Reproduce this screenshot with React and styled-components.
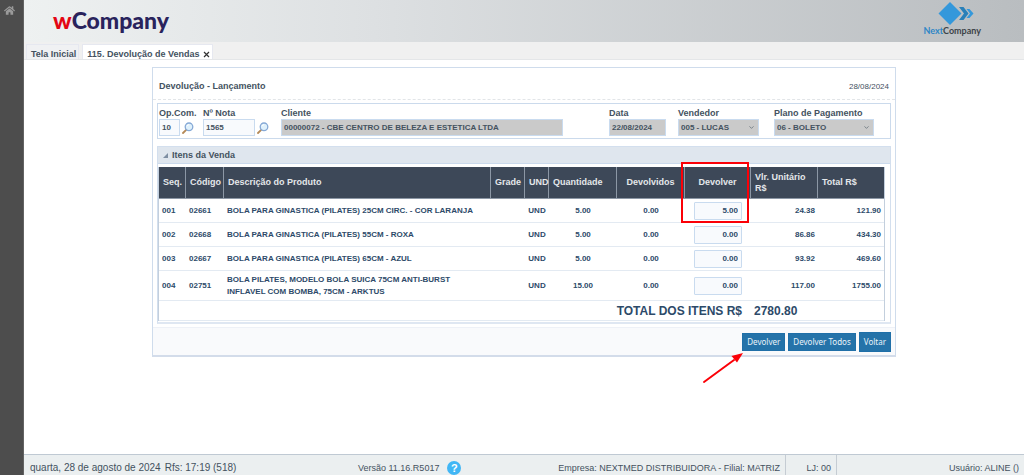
import { useState } from "react"
import styled, { createGlobalStyle } from "styled-components"
import { FaHome } from "react-icons/fa"
import { ChevronDown } from "lucide-react"

const GlobalStyle = createGlobalStyle`
    * {
        box-sizing: border-box;
    }

    body {
        margin: 0;
        background: #fff;
        color: #44525f;
        font: 9px/11px "Liberation Sans", Arial, sans-serif;
    }

    button, input, select {
        font: inherit;
        color: inherit;
    }
`

const Page = styled.div`
    display: flex;
    min-height: 100vh;
`

const Sidebar = styled.nav`
    width: 24px;
    flex: none;
    padding: 5px 0 0 4px;
    background: #4d4d4d;
    border-right: 1px solid #636363;

    a {
        display: flex;
        color: #9a9a9a;
        font-size: 11px;
    }
`

const Main = styled.div`
    flex: 1;
    min-width: 0;
    display: flex;
    flex-direction: column;
`

const Header = styled.header`
    height: 42px;
    display: flex;
    justify-content: space-between;
    align-items: center;
    padding: 0 43px 0 29px;
    background: linear-gradient(to right, #eef1f1, #dde0e2 35%, #b9bdc0);
`

const Brand = styled.div`
    padding-bottom: 2px;
    font: 900 23px/36px Lato, "Open Sans", sans-serif;
    color: #29235c;

    span {
        color: #e30613;
    }
`

const Partner = styled.div`
    display: flex;
    flex-direction: column;
    align-items: center;
    padding-bottom: 4px;
    font: 700 9px/12px Lato, "Open Sans", sans-serif;
    color: #3c4348;

    svg {
        display: block;
        margin-left: 8px;
    }

    span {
        color: #2f86c6;
    }
`

const Tabs = styled.div`
    height: 18px;
    display: flex;
    align-items: flex-end;
    gap: 3px;
    padding-left: 2px;
    background: #f0f0f0;
    border-bottom: 1px solid #e4e6e8;
`

const Tab = styled.button`
    height: 15px;
    display: flex;
    align-items: center;
    gap: 4px;
    padding: 4px 2px 0 4px;
    border: 1px solid #e6e8f0;
    border-bottom: 0;
    background: ${props => props.$active ? '#fff' : '#f0f1f3'};
    font-weight: bold;
    white-space: nowrap;
`

const Content = styled.main`
    flex: 1;
    padding: 7px 128px;
`

const Window = styled.section`
    border: 1px solid #cfdcec;
    border-bottom: 2px solid #d3dcea;
`

const WindowTitle = styled.div`
    height: 32px;
    display: flex;
    justify-content: space-between;
    align-items: center;
    padding: 5px 6px 0;
    border-bottom: 1px dashed #e2e5e8;

    h1 {
        margin: 0;
        font-size: 9px;
    }

    span {
        font-size: 8px;
    }
`

const Form = styled.form`
    display: grid;
    grid-template-columns: 44px 78px minmax(0, 1fr) 69px 96px 116px;
    margin: 3px 4px 0;
    padding: 4px 0 2px 1px;
    border: 1px solid #cbdaec;
    font-weight: bold;
`

const Field = styled.div`
    padding-right: ${props => props.$space || 0}px;

    label {
        display: block;
        height: 11px;
        white-space: nowrap;
    }
`

const Control = styled.div`
    display: flex;
    align-items: center;
    gap: 2px;
    position: relative;
`

const TextInput = styled.input`
    flex: 1;
    min-width: 0;
    width: 100%;
    height: 17px;
    padding: 0 2px;
    border: 1px solid #c9dbef;
    background: ${props => props.readOnly ? '#cacaca' : '#f8fafd'};
    font-size: 8px;
`

const Dropdown = styled.select`
    appearance: none;
    width: 100%;
    height: 17px;
    padding: 0 2px;
    border: 1px solid #c9dbef;
    border-radius: 0;
    background: #cacaca;
    font-size: 8px;

    & + svg {
        position: absolute;
        right: 4px;
        pointer-events: none;
    }
`

const SearchButton = styled.button`
    display: flex;
    padding: 0;
    border: 0;
    background: none;
`

const Items = styled.div`
    margin: 7px 4px 3px;
    padding-bottom: 1px;
    border: 1px solid #d3dfee;
    border-bottom: 2px solid #dfe7f2;
`

const ItemsTitle = styled.h2`
    height: 17px;
    display: flex;
    align-items: center;
    gap: 4px;
    margin: 0 0 3px;
    padding-left: 5px;
    background: #dfe6ee;
    border-bottom: 1px solid #cbdaec;
    font-size: 9px;
`

const Table = styled.table`
    width: calc(100% - 5px);
    table-layout: fixed;
    border-collapse: separate;
    border-spacing: 0;
    border: 1px solid #c3cfdd;
    border-top: 0;
    border-bottom: 0;
    color: #2d4a69;
    font-weight: bold;

    th {
        height: 32px;
        position: relative;
        padding: 0 4px;
        background: #3d4858;
        border-right: 1px solid #8c97a5;
        border-bottom: 1px solid #8c97a5;
        color: #e4e7ea;
        text-align: left;
    }

    th:last-child {
        border-right: 0;
    }

    td {
        height: 24px;
        padding: 0 3px;
        border-bottom: 1px solid #e3eaf2;
        font-size: 8px;
        line-height: 12px;
    }

    .center {
        text-align: center;
    }

    td.right {
        text-align: right;
    }
`

const Quantity = styled.input`
    display: block;
    width: 48px;
    height: 18px;
    margin: 0 auto;
    padding: 0 3px;
    border: 1px solid #c9dbef;
    border-radius: 1px;
    background: #f8fafd;
    text-align: right;
`

const TotalRow = styled.tr`
    && td {
        height: 20px;
        padding-right: 9px;
        font-size: 12px;
        font-weight: 900;
    }

    && td + td {
        padding: 0 0 0 3px;
    }
`

const Highlight = styled.span`
    position: absolute;
    top: -5px;
    left: -4px;
    width: 68px;
    height: 61px;
    border: 2px solid #fb0007;
    z-index: 1;
    pointer-events: none;
`

const Actions = styled.div`
    display: flex;
    justify-content: flex-end;
    align-items: center;
    gap: 3px;
    padding: 4px 4px 3px;
    border-top: 1px solid #eef1f7;
    background: #f9fafc;
`

const ActionItem = styled.div`
    position: relative;

    svg {
        position: absolute;
        top: 19px;
        left: -40px;
        pointer-events: none;
    }
`

const ActionButton = styled.button`
    display: block;
    height: ${props => props.$large ? '20px' : '18px'};
    padding: 0 4px;
    border: 1px solid #1f6fa8;
    background: #2573a9;
    color: #eaf3fa;
    font: 8px/12px "Noto Sans", "Open Sans", sans-serif;
    white-space: nowrap;
`

const StatusBar = styled.footer`
    height: 21px;
    display: flex;
    background: #ebeff0;
    border-top: 1px solid #bfc9d3;
    line-height: 12px;
    white-space: nowrap;

    > div {
        display: flex;
        align-items: center;
        padding-top: 5px;
    }
`

const DateInfo = styled.div`
    width: 328px;
    padding-left: 6px;
    gap: 4px;
    font-size: 10px;
`

const Version = styled.div`
    flex: 1;
    gap: 8px;
    padding-left: 6px;
`

const StatusCell = styled.div`
    width: ${props => props.$width || 'auto'};
    justify-content: flex-end;
    padding: 0 5px;
    border-right: ${props => props.$last ? '0' : '1px solid #c5ccd3'};
`

const HelpButton = styled.button`
    width: 14px;
    height: 14px;
    padding: 0;
    border: 0;
    border-radius: 50%;
    background: #41b6f5;
    color: #fff;
    font-size: 11px;
    font-weight: bold;
    line-height: 14px;
`

const ITEMS = [
    { seq: '001', code: '02661', name: 'BOLA PARA GINASTICA (PILATES) 25CM CIRC. - COR LARANJA', amount: '5.00', give: '5.00', price: '24.38', total: '121.90' },
    { seq: '002', code: '02668', name: 'BOLA PARA GINASTICA (PILATES) 55CM - ROXA', amount: '5.00', give: '0.00', price: '86.86', total: '434.30' },
    { seq: '003', code: '02667', name: 'BOLA PARA GINASTICA (PILATES) 65CM - AZUL', amount: '5.00', give: '0.00', price: '93.92', total: '469.60' },
    { seq: '004', code: '02751', name: 'BOLA PILATES, MODELO BOLA SUICA 75CM ANTI-BURST INFLAVEL COM BOMBA, 75CM - ARKTUS', amount: '15.00', give: '0.00', price: '117.00', total: '1755.00' },
]

const ProductCell = styled.td`
    && {
        padding-right: 10px;
        height: ${props => props.$tall ? '30px' : '24px'};
    }
`

function Search({ label }) {
    return (
        <SearchButton type="button" aria-label={label}>
            <svg width="12" height="12" viewBox="0 0 12 12">
                <path d="M1 11 L4.2 7.8" stroke="#b58a58" strokeWidth="1.8" strokeLinecap="round" />
                <circle cx="7" cy="4.8" r="3.8" fill="#dff1fc" stroke="#86a9d6" strokeWidth="1.3" />
                <path d="M5 4.2 A2.2 2.2 0 0 1 7 2.7" fill="none" stroke="#fff" />
            </svg>
        </SearchButton>
    )
}

export default function App() {
    const [give, setGive] = useState(ITEMS.map(item => item.give))

    const updateGive = (index, value) => {
        setGive(prev => prev.map((old, i) => i === index ? value : old))
    }

    return (
        <Page>
            <GlobalStyle />
            <Sidebar>
                <a href="#inicio" aria-label="Início"><FaHome /></a>
            </Sidebar>
            <Main>
                <Header>
                    <Brand><span>w</span>Company</Brand>
                    <Partner>
                        <svg width="36" height="23" viewBox="0 0 36 23">
                            <path d="M12 0 L23.5 11.5 L12 23 L0.5 11.5 Z" fill="#3498db" />
                            <path d="M21 5 h4.5 l5 6.5 l-5 6.5 h-4.5 l5 -6.5 Z" fill="#2980b9" />
                            <path d="M28.5 7 h3 l4 4.5 l-4 4.5 h-3 l3.5 -4.5 Z" fill="#3498db" />
                        </svg>
                        <div><span>Next</span>Company</div>
                    </Partner>
                </Header>
                <Tabs>
                    <Tab>Tela Inicial</Tab>
                    <Tab $active>
                        115. Devolução de Vendas
                        <svg width="7" height="7" viewBox="0 0 7 7" stroke="#333" strokeWidth="1.2">
                            <path d="M1 1 L6 6 M6 1 L1 6" />
                        </svg>
                    </Tab>
                </Tabs>
                <Content>
                    <Window>
                        <WindowTitle>
                            <h1>Devolução - Lançamento</h1>
                            <span>28/08/2024</span>
                        </WindowTitle>
                        <Form>
                            <Field $space={9}>
                                <label htmlFor="op">Op.Com.</label>
                                <Control>
                                    <TextInput id="op" defaultValue="10" />
                                    <Search label="Buscar operação" />
                                </Control>
                            </Field>
                            <Field $space={12}>
                                <label htmlFor="nota">Nº Nota</label>
                                <Control>
                                    <TextInput id="nota" defaultValue="1565" />
                                    <Search label="Buscar nota" />
                                </Control>
                            </Field>
                            <Field $space={46}>
                                <label htmlFor="cliente">Cliente</label>
                                <TextInput id="cliente" readOnly value="00000072 - CBE CENTRO DE BELEZA E ESTETICA LTDA" />
                            </Field>
                            <Field $space={12}>
                                <label htmlFor="data">Data</label>
                                <TextInput id="data" readOnly value="22/08/2024" />
                            </Field>
                            <Field $space={15}>
                                <label htmlFor="vendedor">Vendedor</label>
                                <Control>
                                    <Dropdown id="vendedor">
                                        <option>005 - LUCAS</option>
                                    </Dropdown>
                                    <ChevronDown size={7} />
                                </Control>
                            </Field>
                            <Field $space={16}>
                                <label htmlFor="plano">Plano de Pagamento</label>
                                <Control>
                                    <Dropdown id="plano">
                                        <option>06 - BOLETO</option>
                                    </Dropdown>
                                    <ChevronDown size={7} />
                                </Control>
                            </Field>
                        </Form>
                        <Items>
                            <ItemsTitle>
                                <svg width="5" height="5" viewBox="0 0 5 5">
                                    <path d="M5 0 V5 H0 Z" fill="#7f8fa3" />
                                </svg>
                                Itens da Venda
                            </ItemsTitle>
                            <Table>
                                <colgroup>
                                    <col width="27" />
                                    <col width="38" />
                                    <col />
                                    <col width="34" />
                                    <col width="24" />
                                    <col width="68" />
                                    <col width="68" />
                                    <col width="66" />
                                    <col width="67" />
                                    <col width="66" />
                                </colgroup>
                                <thead>
                                    <tr>
                                        <th>Seq.</th>
                                        <th>Código</th>
                                        <th>Descrição do Produto</th>
                                        <th>Grade</th>
                                        <th>UND</th>
                                        <th>Quantidade</th>
                                        <th className="center">Devolvidos</th>
                                        <th className="center">
                                            Devolver
                                            <Highlight />
                                        </th>
                                        <th>Vlr. Unitário R$</th>
                                        <th>Total R$</th>
                                    </tr>
                                </thead>
                                <tbody>
                                    {ITEMS.map((item, index) => (
                                        <tr key={item.seq}>
                                            <td>{item.seq}</td>
                                            <td>{item.code}</td>
                                            <ProductCell $tall={item.name.length > 60}>{item.name}</ProductCell>
                                            <td />
                                            <td className="center">UND</td>
                                            <td className="center">{item.amount}</td>
                                            <td className="center">0.00</td>
                                            <td>
                                                <Quantity
                                                    aria-label={'Devolver ' + item.seq}
                                                    value={give[index]}
                                                    onChange={e => updateGive(index, e.target.value)}
                                                />
                                            </td>
                                            <td className="right">{item.price}</td>
                                            <td className="right">{item.total}</td>
                                        </tr>
                                    ))}
                                    <TotalRow>
                                        <td colSpan={8} className="right">TOTAL DOS ITENS R$</td>
                                        <td colSpan={2}>2780.80</td>
                                    </TotalRow>
                                </tbody>
                            </Table>
                        </Items>
                        <Actions>
                            <ActionItem>
                                <ActionButton>Devolver</ActionButton>
                                <svg width="42" height="32" viewBox="0 0 42 32">
                                    <path d="M2 30 L32 8" stroke="#fb0007" strokeWidth="2" strokeLinecap="round" />
                                    <path d="M41 1 L35 10.500 L29.500 4 Z" fill="#fb0007" />
                                </svg>
                            </ActionItem>
                            <ActionButton>Devolver Todos</ActionButton>
                            <ActionButton $large>Voltar</ActionButton>
                        </Actions>
                    </Window>
                </Content>
                <StatusBar>
                    <DateInfo>
                        <span>quarta, 28 de agosto de 2024</span>
                        <span>Rfs: 17:19 (518)</span>
                    </DateInfo>
                    <Version>
                        Versão 11.16.R5017
                        <HelpButton aria-label="Ajuda">?</HelpButton>
                    </Version>
                    <StatusCell>Empresa: NEXTMED DISTRIBUIDORA - Filial: MATRIZ</StatusCell>
                    <StatusCell $width="51px">LJ: 00</StatusCell>
                    <StatusCell $width="187px" $last>Usuário: ALINE ()</StatusCell>
                </StatusBar>
            </Main>
        </Page>
    )
}
